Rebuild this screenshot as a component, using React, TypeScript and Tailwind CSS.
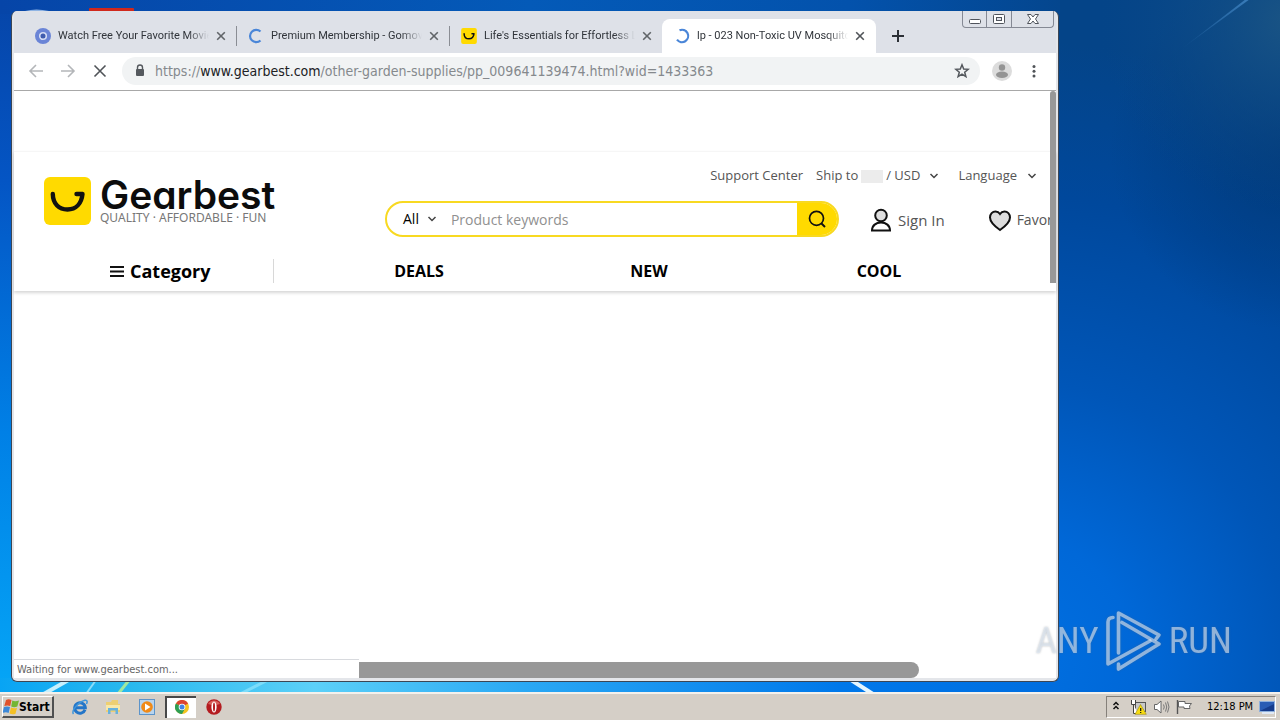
import { ReactNode } from "react";

const UI = "font-['DejaVu_Sans_Condensed','DejaVu_Sans',sans-serif]";

function Wallpaper() {
  return (
    <svg
      className="absolute inset-0 h-full w-full"
      viewBox="0 0 1280 720"
      preserveAspectRatio="none"
      aria-hidden="true"
    >
      <defs>
        <linearGradient id="left" x1="0" y1="0" x2="0" y2="1">
          <stop offset="0" stopColor="#0645a8" />
          <stop offset="0.25" stopColor="#0455c4" />
          <stop offset="0.6" stopColor="#0080e6" />
          <stop offset="1" stopColor="#06aaf8" />
        </linearGradient>
        <linearGradient id="top" x1="0" y1="0" x2="1" y2="0">
          <stop offset="0" stopColor="#0645a8" />
          <stop offset="0.5" stopColor="#045ab8" />
          <stop offset="0.8" stopColor="#0352ac" />
          <stop offset="1" stopColor="#04468e" />
        </linearGradient>
        <linearGradient id="bottom" x1="0" y1="0" x2="1" y2="0">
          <stop offset="0" stopColor="#08a4f4" />
          <stop offset="0.12" stopColor="#28b8ee" />
          <stop offset="0.3" stopColor="#5cd0f8" />
          <stop offset="0.5" stopColor="#2aa8f4" />
          <stop offset="0.8" stopColor="#0078ea" />
          <stop offset="1" stopColor="#006ee0" />
        </linearGradient>
        <radialGradient id="right" gradientUnits="userSpaceOnUse" cx="1010" cy="660" r="620">
          <stop offset="0" stopColor="#0070e2" />
          <stop offset="0.2" stopColor="#0068d8" />
          <stop offset="0.45" stopColor="#0056b8" />
          <stop offset="0.75" stopColor="#00489c" />
          <stop offset="1" stopColor="#044488" />
        </radialGradient>
        <radialGradient id="glow" gradientUnits="userSpaceOnUse" cx="1290" cy="20" r="190">
          <stop offset="0" stopColor="#1a5484" />
          <stop offset="1" stopColor="#0a4888" stopOpacity="0" />
        </radialGradient>
        <radialGradient id="shade" gradientUnits="userSpaceOnUse" cx="1290" cy="150" r="180">
          <stop offset="0" stopColor="#003878" stopOpacity="0.8" />
          <stop offset="1" stopColor="#003878" stopOpacity="0" />
        </radialGradient>
        <linearGradient id="ray" x1="0" y1="1" x2="1" y2="0">
          <stop offset="0" stopColor="#4a90d0" stopOpacity="0" />
          <stop offset="1" stopColor="#4a90d0" stopOpacity="0.7" />
        </linearGradient>
      </defs>
      <rect width="1280" height="720" fill="url(#left)" />
      <rect x="900" width="380" height="720" fill="url(#right)" />
      <rect x="1100" width="180" height="350" fill="url(#shade)" />
      <rect x="1050" width="230" height="220" fill="url(#glow)" />
      <rect width="1060" height="14" fill="url(#top)" />
      <rect y="678" width="1050" height="42" fill="url(#bottom)" />
      <path d="M1180 50 L1246 -1 L1250 -1 Z" fill="url(#ray)" />
      <path d="M25 11 Q36 8 49 11 Z" fill="#8fb4e4" />
      <rect x="89" y="8" width="45" height="8" rx="1" fill="#d0281c" />
      <g strokeLinecap="butt" fill="none">
        <path d="M42 695 L72 678" stroke="#c8f0fc" strokeWidth="4" />
        <path d="M86 694 L96 680" stroke="#8cdcf8" strokeWidth="2" />
        <path d="M118 694 L130 679" stroke="#a0e8a0" strokeWidth="3" />
        <path d="M240 694 L268 680" stroke="#7cdcfa" strokeWidth="3" />
        <path d="M848 678 L876 696" stroke="#e4f6ff" strokeWidth="4" />
      </g>
    </svg>
  );
}

function Smile({ className }: { className: string }) {
  return (
    <svg className={className} viewBox="0 0 47 48" aria-hidden="true">
      <rect width="47" height="48" rx="6" fill="#ffda00" />
      <path
        d="M8.800 17 C9 27 15 32.500 23.500 32.500 C32 32.500 37.500 26.500 38.500 17 H32.500"
        fill="none"
        stroke="#111"
        strokeWidth="4.400"
        strokeLinecap="round"
        strokeLinejoin="round"
      />
    </svg>
  );
}

function Spinner({ d }: { d: string }) {
  return (
    <svg className="size-4 shrink-0" viewBox="0 0 16 16" aria-hidden="true">
      <path d={d} fill="none" stroke="#4a86d8" strokeWidth="2.200" />
    </svg>
  );
}

function Cross({ className }: { className: string }) {
  return (
    <svg className={className} viewBox="0 0 14 14" aria-hidden="true">
      <path d="M3.200 3.200 L10.800 10.800 M10.800 3.200 L3.200 10.800" stroke="currentColor" strokeWidth="1.600" />
    </svg>
  );
}

function Tab({ icon, title, active, last }: { icon: ReactNode; title: string; active?: boolean; last?: boolean }) {
  return (
    <div
      className={
        active
          ? "-ml-px flex h-[34px] w-[214px] shrink-0 items-center rounded-t-lg bg-white pl-3 pr-[9px]"
          : "flex h-[34px] w-[213px] shrink-0 items-center pl-[11px]"
      }
    >
      <button
        type="button"
        role="tab"
        aria-selected={!!active}
        className="flex min-w-0 flex-1 items-center gap-[7px] text-left"
      >
        {icon}
        <span className="w-[151px] overflow-hidden whitespace-nowrap font-['Roboto',sans-serif] text-[11px] leading-4 text-[#30343a] [mask-image:linear-gradient(to_right,black_86%,transparent)]">
          {title}
        </span>
      </button>
      <button type="button" aria-label={`Close ${title}`} className={active ? "text-[#505458]" : "mr-2 text-[#606468]"}>
        <Cross className="size-3.5" />
      </button>
      {!active && <span className={last ? "h-5 w-px" : "h-5 w-px bg-[#8a8d94]"} />}
    </div>
  );
}

function WindowControls() {
  return (
    <div className="mr-0.5 flex h-[17px] shrink-0 self-start rounded-b border border-t-0 border-[#858994] text-[#50545c]">
      <button type="button" aria-label="Minimize" className="flex w-6 items-center justify-center border-r border-[#858994]">
        <svg className="h-4 w-4" viewBox="0 0 16 16">
          <rect x="2.500" y="8.500" width="11" height="4" rx="1" fill="#fff" stroke="currentColor" />
        </svg>
      </button>
      <button type="button" aria-label="Restore" className="flex w-[25px] items-center justify-center border-r border-[#858994]">
        <svg className="h-4 w-4" viewBox="0 0 16 16">
          <rect x="2.500" y="3.500" width="11" height="9" rx="1" fill="#fff" stroke="currentColor" />
          <rect x="5.500" y="6.500" width="5" height="3" fill="#e0e2ea" stroke="currentColor" />
        </svg>
      </button>
      <button type="button" aria-label="Close window" className="flex w-[41px] items-center justify-center">
        <svg className="h-4 w-4" viewBox="0 0 16 16">
          <path
            d="M2.500 3.500 H6 L8 6 L10 3.500 H13.500 L10.500 8 L13.500 12.500 H10 L8 10 L6 12.500 H2.500 L5.500 8 Z"
            fill="#fff"
            stroke="currentColor"
          />
        </svg>
      </button>
    </div>
  );
}

function TabStrip() {
  return (
    <div className="flex h-[42px] items-end bg-[#dee1e8] pl-2.5">
      <div role="tablist" className="flex">
        <Tab
          title="Watch Free Your Favorite Movies"
          icon={
            <svg className="size-4 shrink-0" viewBox="0 0 16 16" aria-hidden="true">
              <circle cx="8" cy="8" r="8" fill="#6a84d6" />
              <circle cx="8" cy="8" r="3.300" fill="#3f5cae" stroke="#d4dcf4" strokeWidth="1.600" />
            </svg>
          }
        />
        <Tab title="Premium Membership - Gomovies" icon={<Spinner d="M12.500 3.500 A6.200 6.200 0 1 0 12.500 12.500" />} />
        <Tab title="Life's Essentials for Effortless Living" last icon={<Smile className="size-4 shrink-0" />} />
        <Tab
          active
          title="lp - 023 Non-Toxic UV Mosquito Killer"
          icon={<Spinner d="M5.500 2.300 A6.200 6.200 0 1 1 3 11.700" />}
        />
      </div>
      <button type="button" aria-label="New tab" className="ml-[15px] flex h-[34px] items-center text-[#2c3036]">
        <svg className="size-3.5" viewBox="0 0 14 14">
          <path d="M7 1 V13 M1 7 H13" stroke="currentColor" strokeWidth="2" />
        </svg>
      </button>
      <div className="flex-1" />
      <WindowControls />
    </div>
  );
}

function Toolbar() {
  return (
    <div className="flex h-[38px] items-center border-b border-[#a8a8a8] bg-white pb-px pl-[14px] pr-3.5">
      <button type="button" aria-label="Back" className="text-[#b4b6b9]">
        <svg className="size-4" viewBox="0 0 16 16">
          <path d="M15 8 H2 M8 2 L2 8 L8 14" fill="none" stroke="currentColor" strokeWidth="1.600" />
        </svg>
      </button>
      <button type="button" aria-label="Forward" className="ml-4 text-[#b4b6b9]">
        <svg className="size-4" viewBox="0 0 16 16">
          <path d="M1 8 H14 M8 2 L14 8 L8 14" fill="none" stroke="currentColor" strokeWidth="1.600" />
        </svg>
      </button>
      <button type="button" aria-label="Stop" className="ml-4 text-[#505458]">
        <svg className="size-4" viewBox="0 0 16 16">
          <path d="M2.500 2.500 L13.500 13.500 M13.500 2.500 L2.500 13.500" stroke="currentColor" strokeWidth="1.600" />
        </svg>
      </button>
      <div className="ml-3.5 flex h-7 min-w-0 flex-1 items-center rounded-full bg-[#f1f3f4] pl-[11px] pr-2.5">
        <svg className="h-4 w-3.5 shrink-0 text-[#55595e]" viewBox="0 0 14 16" aria-hidden="true">
          <rect x="3" y="6" width="8" height="7" rx="1" fill="currentColor" />
          <path d="M4.500 6.500 V4.500 a2.500 2.500 0 0 1 5 0 V6.500" fill="none" stroke="currentColor" strokeWidth="1.400" />
        </svg>
        <div className="ml-2 min-w-0 flex-1 overflow-hidden whitespace-nowrap text-sm text-[#85898d]">
          https://<span className="text-[#202124]">www.gearbest.com</span>
          /other-garden-supplies/pp_009641139474.html?wid=1433363
        </div>
        <button type="button" aria-label="Bookmark this page" className="text-[#55595e]">
          <svg className="size-4" viewBox="0 0 16 16">
            <path
              d="M8 1.800 L9.700 6 L14.200 6.300 L10.700 9.200 L11.900 13.700 L8 11.200 L4.100 13.700 L5.300 9.200 L1.800 6.300 L6.300 6 Z"
              fill="none"
              stroke="currentColor"
              strokeWidth="1.500"
            />
          </svg>
        </button>
      </div>
      <button type="button" aria-label="Profile" className="ml-3">
        <svg className="size-5" viewBox="0 0 20 20">
          <circle cx="10" cy="10" r="10" fill="#dcdcdc" />
          <circle cx="10" cy="6.500" r="3.200" fill="#949494" />
          <ellipse cx="10" cy="13.800" rx="6" ry="3.200" fill="#949494" />
        </svg>
      </button>
      <button type="button" aria-label="Menu" className="ml-[14px] text-[#505458]">
        <svg className="size-4" viewBox="0 0 16 16" fill="currentColor">
          <circle cx="8" cy="3.500" r="1.500" />
          <circle cx="8" cy="8.200" r="1.500" />
          <circle cx="8" cy="13" r="1.500" />
        </svg>
      </button>
    </div>
  );
}

function Chevron() {
  return (
    <svg className="size-2.5" viewBox="0 0 10 10" aria-hidden="true">
      <path d="M1.500 3 L5 6.500 L8.500 3" fill="none" stroke="#444" strokeWidth="1.500" />
    </svg>
  );
}

function ShopHeader() {
  return (
    <header className="h-[140px] overflow-hidden whitespace-nowrap border-t border-[#f6f6f6] bg-white font-['Open_Sans',sans-serif] shadow-[0_2px_3px_rgba(0,0,0,0.16)]">
      <div className="flex h-[99px]">
        <a href="#home" className="flex w-[371px] shrink-0 gap-[9px] pl-[30px] pt-[25px]">
          <Smile className="h-12 w-[47px]" />
          <span className="flex flex-col">
            <span className="font-['Inter',sans-serif] text-[39px] font-semibold leading-[35px] text-[#0c0c0c] [font-feature-settings:'cv11']">
              Gearbest
            </span>
            <span className="font-['Noto_Sans',sans-serif] text-xs leading-3 text-[#777]">
              QUALITY · AFFORDABLE · FUN
            </span>
          </span>
        </a>
        <div className="flex min-w-0 flex-1 flex-col pt-3.5">
          <nav className="flex h-5 items-center justify-end pr-[19px] text-[13px] text-[#555]">
            <a href="#support">Support Center</a>
            <button type="button" className="ml-[13px] flex items-center">
              Ship to
              <span className="mx-[3px] h-[13px] w-[22px] bg-[#ececec]" />/ USD
              <span className="ml-[9px]">
                <Chevron />
              </span>
            </button>
            <button type="button" className="ml-[19px] flex items-center gap-2.5">
              Language
              <Chevron />
            </button>
          </nav>
          <div className="mt-[15px] flex h-9 items-center">
            <form
              className="flex h-9 w-[454px] shrink-0 overflow-hidden rounded-full border-2 border-[#f8d921] bg-white"
              onSubmit={(e) => e.preventDefault()}
            >
              <button type="button" className="flex items-center gap-2 pl-4 text-sm text-black">
                All
                <Chevron />
              </button>
              <input
                type="text"
                aria-label="Product keywords"
                placeholder="Product keywords"
                className="min-w-0 flex-1 bg-transparent pl-3.5 pt-px text-sm outline-none placeholder:text-[#909090]"
              />
              <button type="submit" aria-label="Search" className="flex w-10 items-center justify-center bg-[#ffda00]">
                <svg className="size-5" viewBox="0 0 20 20">
                  <circle cx="9.500" cy="9.300" r="7" fill="none" stroke="#111" strokeWidth="1.700" />
                  <path d="M14.500 14.500 L18 18" stroke="#111" strokeWidth="2" />
                </svg>
              </button>
            </form>
            <a href="#sign-in" className="ml-[31px] flex shrink-0 items-center gap-1.5 pt-0.5 text-[15px] text-[#555]">
              <svg className="h-6 w-[22px]" viewBox="0 0 22 24" aria-hidden="true">
                <g stroke="#111" strokeWidth="2">
                  <circle cx="11" cy="7.500" r="5.800" fill="#dedede" />
                  <path d="M2 22.500 C2 17.500 6 14.500 11 14.500 C16 14.500 20 17.500 20 22.500 Z" fill="#fff" />
                </g>
              </svg>
              Sign In
            </a>
            <a href="#favorites" className="ml-[43px] flex shrink-0 items-center gap-[5px] pt-0.5 text-sm text-[#555]">
              <svg className="h-6 w-6" viewBox="0 0 24 24" aria-hidden="true">
                <path
                  d="M12 22 C7 18.500 2 14 2 9.500 C2 6 4.500 3.500 7.500 3.500 C9.500 3.500 11 4.500 12 6 C13 4.500 14.500 3.500 16.500 3.500 C19.500 3.500 22 6 22 9.500 C22 14 17 18.500 12 22 Z"
                  fill="#dedede"
                  stroke="#111"
                  strokeWidth="2"
                />
              </svg>
              Favorites
            </a>
          </div>
        </div>
      </div>
      <nav className="flex h-10 items-center text-base font-bold text-black">
        <button type="button" className="flex h-6 w-[260px] shrink-0 items-center gap-1.5 border-r border-[#d8d8d8] pl-24 text-lg">
          <svg className="h-3 w-3.5" viewBox="0 0 14 12" aria-hidden="true">
            <path d="M0 2 H14 M0 6.500 H14 M0 11 H14" stroke="#111" strokeWidth="1.800" />
          </svg>
          Category
        </button>
        <div className="ml-[30px] flex">
          <a href="#deals" className="w-[230px] text-center">DEALS</a>
          <a href="#new" className="w-[230px] text-center">NEW</a>
          <a href="#cool" className="w-[230px] text-center">COOL</a>
        </div>
      </nav>
    </header>
  );
}

function Browser() {
  return (
    <section
      aria-label="Browser"
      className="relative flex min-w-0 flex-1 flex-col overflow-hidden rounded-md border border-t-0 border-[#3c4654] bg-[#e4e6ea] pb-[3px] pl-0.5 pr-0.5"
    >
      <TabStrip />
      <Toolbar />
      <div className="relative flex-1 bg-white pt-[60px]">
        <ShopHeader />
        <div className="absolute right-0 top-0 h-[192px] w-1.5 rounded-t-md bg-[#989898]" />
        <div className="absolute bottom-0 left-0 flex h-[19px] items-end">
          <div className="h-[19px] w-[345px] border-t border-[#d8dade] bg-white pl-[3px] text-[11px] leading-[19px] text-[#666]">
            Waiting for www.gearbest.com...
          </div>
          <div className="h-4 w-[560px] rounded-r-full bg-[#989898]" />
        </div>
      </div>
    </section>
  );
}

function Watermark() {
  return (
    <div
      aria-label="ANY RUN"
      className="absolute bottom-5 right-12 flex items-center gap-[7px] font-['Roboto_Condensed','Liberation_Sans_Narrow','Liberation_Sans',sans-serif] text-[37px] leading-[62px] text-[#dfe9f5]/60 drop-shadow-[0_0_1px_rgba(90,100,110,0.6)]"
    >
      <span>ANY</span>
      <svg className="h-[62px] w-[56px]" viewBox="0 0 56 62" aria-hidden="true">
        <g fill="none" stroke="currentColor" strokeWidth="3.600" strokeLinejoin="round" strokeLinecap="round">
          <path d="M7 7.500 Q2 7.500 2 12 V54 L44 31" />
          <path d="M12.500 43 V3 L53 25 L50 29" />
          <path d="M16 12.500 L53 34 L12.500 59 V54" />
        </g>
      </svg>
      <span>RUN</span>
    </div>
  );
}

function Taskbar() {
  return (
    <footer className="relative flex h-7 shrink-0 items-center border-t-2 border-[#f4f1ec] bg-[#d5cfc7] pl-0.5 pr-1">
      <button
        type="button"
        className="flex h-[22px] w-[52px] items-center border border-b-2 border-r-2 border-b-[#505050] border-l-white border-r-[#505050] border-t-white text-xs font-bold text-black"
      >
        <svg className="h-4 w-4 shrink-0" viewBox="0 0 16 16" aria-hidden="true">
          <path d="M3 1 Q5.500 -0.500 8.500 1 L7.200 7 Q4.500 5.800 1.300 7 Z" fill="#e0522c" />
          <path d="M9.300 1.500 Q12 3 16 1.500 L14.300 7.600 Q11 9 8.200 7.500 Z" fill="#74b634" />
          <path d="M1 8 Q4 6.800 7 8 L5.600 14 Q3 12.500 -0.500 14 Z" fill="#3c88d8" />
          <path d="M8 8.500 Q11 10 14 8.700 L12.500 14.700 Q9.500 16 6.500 14.500 Z" fill="#f4c024" />
        </svg>
        Start
      </button>
      <button type="button" aria-label="Internet Explorer" className="ml-[18px]">
        <svg className="size-4" viewBox="0 0 16 16">
          <path d="M13 10.800 A5.300 5.300 0 1 1 13.300 8.700 H4" fill="none" stroke="#2476c8" strokeWidth="3" />
          <path d="M1.500 15 C-1 12 6 3 13 1.200 C15.500 .8 15.500 3 14.500 5" fill="none" stroke="#3f96dc" strokeWidth="1.500" />
        </svg>
      </button>
      <button type="button" aria-label="File Explorer" className="ml-[17px]">
        <svg className="size-4" viewBox="0 0 16 16">
          <path d="M1 3 H6 L7 1 H13 V5 H15 V13 H1 Z" fill="#edcf72" />
          <path d="M1 6 H15 V11 H1 Z" fill="#f8e8a8" />
          <path d="M3 15 V9 H13 V15 H10.500 V11.500 H5.500 V15 Z" fill="#68b2dc" />
        </svg>
      </button>
      <button type="button" aria-label="Media Player" className="ml-[18px]">
        <svg className="size-4" viewBox="0 0 16 16">
          <rect x=".5" y=".5" width="15" height="15" fill="#b8d4ee" stroke="#5c94ca" />
          <circle cx="8" cy="8" r="5.800" fill="#f08a18" />
          <path d="M6 4.500 L11.500 8 L6 11.500 Z" fill="#fff" />
        </svg>
      </button>
      <button
        type="button"
        aria-label="Chrome"
        className="ml-2.5 flex h-[22px] w-[31px] items-center justify-center border-l-2 border-t-2 border-[#484848] bg-white pb-0.5"
      >
        <svg className="size-3.5" viewBox="0 0 14 14">
          <circle cx="7" cy="7" r="7" fill="#f4c420" />
          <path d="M7 7 L.9 3.500 A7 7 0 0 1 13.100 3.500 Z" fill="#dc4432" />
          <path d="M7 7 L.9 3.500 A7 7 0 0 0 7 14 L10 8.500 Z" fill="#2e9e54" />
          <circle cx="7" cy="7" r="3.300" fill="#fff" />
          <circle cx="7" cy="7" r="2.500" fill="#4484e4" />
        </svg>
      </button>
      <button type="button" aria-label="Opera" className="ml-2.5">
        <svg className="size-4" viewBox="0 0 16 16">
          <circle cx="8" cy="8" r="7.700" fill="#b41c20" />
          <path d="M2 5 A7 7 0 0 1 14 5 Q8 7 2 5 Z" fill="#d8605c" />
          <ellipse cx="8" cy="8" rx="2.600" ry="5.500" fill="#fff" />
          <ellipse cx="8" cy="8" rx="1" ry="4.500" fill="#b41c20" />
        </svg>
      </button>
      <div className="flex-1" />
      <div className="flex h-[22px] w-[170px] items-center border border-b-white border-l-[#85807a] border-r-white border-t-[#85807a] pl-[5px] text-[11px] text-black">
        <button type="button" aria-label="Show hidden icons">
          <svg className="h-3 w-2" viewBox="0 0 8 12">
            <path d="M1.500 4 L4 1.500 L6.500 4 M1.500 8 L4 5.500 L6.500 8" fill="none" stroke="#111" strokeWidth="1.500" />
          </svg>
        </button>
        <svg className="ml-2.5 h-4 w-[17px]" viewBox="0 0 17 16" role="img" aria-label="Network">
          <rect x="5.500" y="3.500" width="10" height="9" fill="#c8c8c8" stroke="#555" />
          <path d="M1.500 1 V5.500 H5.500 V1 M3.500 5.500 V14.500 H8" fill="#fff" stroke="#444" />
          <path d="M10.500 5.500 L16.300 15.300 H5 Z" fill="#f8dc10" stroke="#9c8a10" strokeWidth=".6" />
          <path d="M10.700 9 V12 M10.700 13 V14" stroke="#111" strokeWidth="1.200" />
        </svg>
        <svg className="ml-[6px] h-4 w-[17px]" viewBox="0 0 17 16" role="img" aria-label="Volume">
          <path d="M1.500 5.500 H4 L8 2 V14 L4 10.500 H1.500 Z" fill="#fff" stroke="#666" />
          <path d="M10.500 5.500 Q12 8 10.500 10.500 M12.500 3.500 Q15 8 12.500 12.500 M14.500 2.500 Q17.500 8 14.500 13.500" fill="none" stroke="#777" />
        </svg>
        <svg className="ml-[6px] h-4 w-[17px]" viewBox="0 0 17 16" role="img" aria-label="Action Center">
          <path d="M1.500 1 V15" stroke="#555" strokeWidth="1.400" />
          <path d="M2.500 2.500 H9 V4.500 H15.500 L13.500 7 L14 9.500 H8 V8 H2.500 Z" fill="#fff" stroke="#666" />
        </svg>
        <time className="ml-3.5 whitespace-nowrap">12:18 PM</time>
        <button type="button" aria-label="Show desktop" className="ml-auto">
          <svg className="h-4 w-4" viewBox="0 0 16 16">
            <rect x=".5" y="2.500" width="15" height="10" fill="#2a5cb4" stroke="#8fb0dc" />
            <path d="M1 12 L15 5 V12 Z" fill="#163c8c" />
            <rect x="3" y="13" width="12" height="2" fill="#dfe8f4" />
          </svg>
        </button>
      </div>
    </footer>
  );
}

export default function App() {
  return (
    <div className={`relative flex min-h-screen flex-col overflow-hidden ${UI}`}>
      <Wallpaper />
      <main className="relative flex flex-1 pb-2.5 pl-[11px] pr-[221px] pt-[11px]">
        <Browser />
        <Watermark />
      </main>
      <Taskbar />
    </div>
  );
}
